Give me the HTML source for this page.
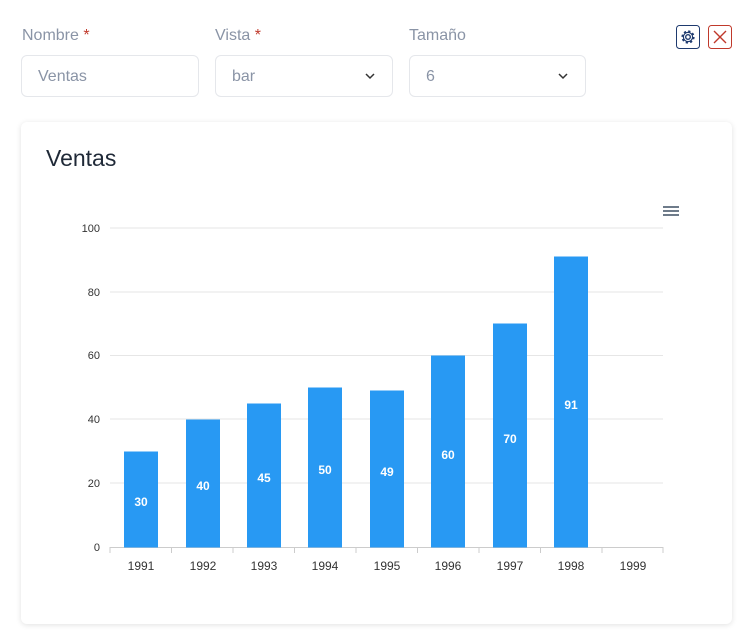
<!DOCTYPE html>
<html><head><meta charset="utf-8"><style>
body{margin:0;width:751px;height:635px;background:#fff;font-family:"Liberation Sans",sans-serif;position:relative;overflow:hidden}
.lbl{position:absolute;top:27px;font-size:16px;color:#8a94a6}
.lbl b{color:#c0392b;font-weight:normal}
.inp{position:absolute;top:55px;height:42px;border:1px solid #e5e7eb;border-radius:6px;box-sizing:border-box;font-size:16px;color:#8a94a6;padding:12px 16px}
.chev{position:absolute;right:16px;top:14px}
.card{position:absolute;left:21px;top:122px;width:711px;height:502px;border-radius:6px;box-shadow:0 1px 6px rgba(0,0,0,.12);background:#fff}
.title{position:absolute;left:46px;top:145px;font-size:23px;color:#1f2937}
</style></head><body>
<div class="lbl" style="left:22px">Nombre <b>*</b></div>
<div class="lbl" style="left:215px">Vista <b>*</b></div>
<div class="lbl" style="left:409px">Tamaño</div>
<div class="inp" style="left:21px;width:178px">Ventas</div>
<div class="inp" style="left:215px;width:178px">bar<svg class="chev" width="12" height="12" viewBox="0 0 12 12"><path d="M2 4l4 4 4-4" stroke="#333" stroke-width="1.5" fill="none"/></svg></div>
<div class="inp" style="left:409px;width:177px">6<svg class="chev" width="12" height="12" viewBox="0 0 12 12"><path d="M2 4l4 4 4-4" stroke="#333" stroke-width="1.5" fill="none"/></svg></div>
<svg style="position:absolute;left:676px;top:25px" width="24" height="24" viewBox="0 0 24 24"><rect x="0.5" y="0.5" width="23" height="23" rx="3" fill="none" stroke="#1e3a6e"/><circle cx="12" cy="12" r="2.3" fill="none" stroke="#1e3a6e" stroke-width="1.4"/><circle cx="12" cy="12" r="5.6" fill="none" stroke="#1e3a6e" stroke-width="2" stroke-dasharray="2.2 2.2"/><circle cx="12" cy="12" r="4.6" fill="none" stroke="#1e3a6e" stroke-width="1.2"/></svg>
<svg style="position:absolute;left:708px;top:25px" width="24" height="24" viewBox="0 0 24 24"><rect x="0.5" y="0.5" width="23" height="23" rx="3" fill="none" stroke="#c0392b"/><path d="M6 6l12 12M18 6L6 18" stroke="#c0392b" stroke-width="1.4"/></svg>
<div class="card"></div>
<div class="title">Ventas</div>
<svg style="position:absolute;left:0;top:0" width="751" height="635">
<g stroke="#6e7b8a" stroke-width="2"><line x1="663" y1="207" x2="679" y2="207"/><line x1="663" y1="211" x2="679" y2="211"/><line x1="663" y1="215" x2="679" y2="215"/></g>
<g stroke="#e6e6e6" stroke-width="1">
<line x1="110" y1="228" x2="663" y2="228"/><line x1="110" y1="292" x2="663" y2="292"/><line x1="110" y1="355.5" x2="663" y2="355.5"/><line x1="110" y1="419" x2="663" y2="419"/><line x1="110" y1="483" x2="663" y2="483"/>
</g>
<line x1="110" y1="547.5" x2="663" y2="547.5" stroke="#ccc"/>
<g font-size="11" fill="#333" text-anchor="end" font-family="Liberation Sans">
<text x="100" y="232">100</text><text x="100" y="296">80</text><text x="100" y="359">60</text><text x="100" y="423">40</text><text x="100" y="487">20</text><text x="100" y="551">0</text>
</g>
<g fill="#2196f3" fill-opacity="0.97">
<rect x="124" y="451.5" width="34" height="96"/>
<rect x="186" y="419.5" width="34" height="128"/>
<rect x="247" y="403.5" width="34" height="144"/>
<rect x="308" y="387.5" width="34" height="160"/>
<rect x="370" y="390.5" width="34" height="157"/>
<rect x="431" y="355.5" width="34" height="192"/>
<rect x="493" y="323.5" width="34" height="224"/>
<rect x="554" y="256.5" width="34" height="291"/>
</g>
<g font-size="12" font-weight="bold" fill="#fff" text-anchor="middle" font-family="Liberation Sans">
<text x="141" y="506">30</text><text x="203" y="490">40</text><text x="264" y="482">45</text><text x="325" y="474">50</text><text x="387" y="476">49</text><text x="448" y="459">60</text><text x="510" y="443">70</text><text x="571" y="409">91</text>
</g>
<g stroke="#ccc"><line x1="171.5" y1="547" x2="171.5" y2="553"/><line x1="233" y1="547" x2="233" y2="553"/><line x1="294.5" y1="547" x2="294.5" y2="553"/><line x1="356" y1="547" x2="356" y2="553"/><line x1="417.5" y1="547" x2="417.5" y2="553"/><line x1="479" y1="547" x2="479" y2="553"/><line x1="540.5" y1="547" x2="540.5" y2="553"/><line x1="602" y1="547" x2="602" y2="553"/><line x1="663" y1="547" x2="663" y2="553"/><line x1="110" y1="547" x2="110" y2="553"/></g>
<g font-size="12" fill="#333" text-anchor="middle" font-family="Liberation Sans">
<text x="141" y="570">1991</text><text x="203" y="570">1992</text><text x="264" y="570">1993</text><text x="325" y="570">1994</text><text x="387" y="570">1995</text><text x="448" y="570">1996</text><text x="510" y="570">1997</text><text x="571" y="570">1998</text><text x="633" y="570">1999</text>
</g>
</svg>
</body></html>
